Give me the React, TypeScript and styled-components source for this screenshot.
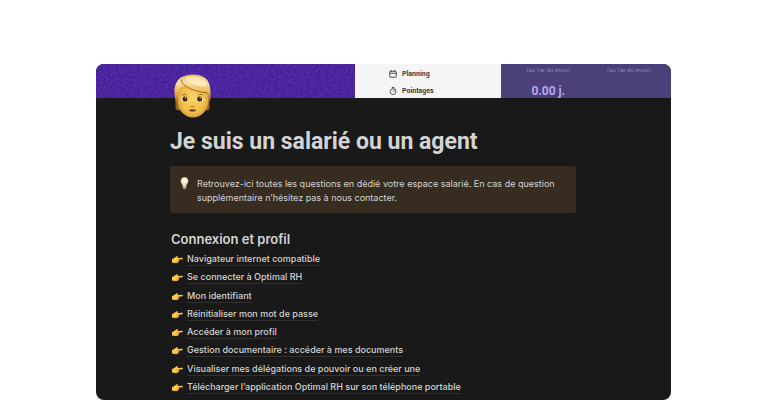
import React from "react";
import styled, { createGlobalStyle } from "styled-components";

const GlobalStyle = createGlobalStyle`
  * { box-sizing: border-box; }
  body {
    margin: 0;
    background: #ffffff;
    font-family: Inter, "Liberation Sans", sans-serif;
  }
`;

const Page = styled.div`
  display: flex;
  flex-direction: column;
  min-height: 100vh;
  padding: 64px 95px 0 96px;
`;

const Card = styled.main`
  flex: 1;
  display: flex;
  flex-direction: column;
  overflow: hidden;
  border-radius: 8px;
  background: #191919;
  color: #d4d4d4;
`;

const Cover = styled.header`
  display: grid;
  grid-template-columns: 259fr 146fr 170fr;
  height: 34px;
  overflow: hidden;
`;

const Texture = styled.svg`
  display: block;
  width: 100%;
  height: 34px;
  background: #45209b;
`;

const Menu = styled.nav`
  display: flex;
  flex-direction: column;
  gap: 5px;
  padding: 4px 0 0 34px;
  background: #f5f5f8;
`;

const MenuLink = styled.a`
  display: flex;
  align-items: center;
  gap: 5px;
  height: 12px;
  color: #3b3b3f;
  font: 700 7px/12px Roboto, sans-serif;
  text-decoration: none;
`;

const Balances = styled.div`
  display: grid;
  grid-template-columns: 1fr 1fr;
  padding: 0 2px 0 7px;
  background: #4b4079;
  text-align: center;
`;

const Note = styled.div`
  color: #8f86b8;
  font: 400 6px/12px Roboto, sans-serif;
`;

const Amount = styled.div`
  padding-top: 7px;
  color: #b7a6ee;
  font: 700 12px/16px Roboto, sans-serif;
`;

const Content = styled.article`
  position: relative;
  flex: 1;
  display: flex;
  flex-direction: column;
  padding: 31px 95px 4px 74px;
`;

const Avatar = styled.svg`
  position: absolute;
  top: -25px;
  left: 77px;
  width: 40px;
  height: 46px;
`;

const Title = styled.h1`
  margin: 0;
  font-family: Roboto, sans-serif;
  font-size: 23px;
  line-height: 26px;
  font-weight: 700;
  white-space: nowrap;
`;

const Callout = styled.aside`
  display: flex;
  gap: 8px;
  margin-top: 11px;
  padding: 11px 12px 8px 10px;
  border-radius: 2px;
  background: #372c20;
  font-size: 9px;
  line-height: 14px;
`;

const CalloutText = styled.p`
  margin: 0;
`;

const BulbIcon = styled.svg`
  flex: none;
  width: 9px;
  height: 12px;
`;

const Section = styled.section`
  flex: 1;
  display: flex;
  flex-direction: column;
  padding: 17px 0 0 1px;
`;

const SectionTitle = styled.h2`
  margin: 0;
  font-size: 13px;
  line-height: 18px;
  font-weight: 600;
`;

const LinkList = styled.ul`
  flex: 1;
  display: flex;
  flex-direction: column;
  justify-content: space-between;
  margin: 2px 0 0;
  padding: 0;
  list-style: none;
`;

const LinkRow = styled.li`
  display: flex;
  align-items: center;
  gap: 4px;
  height: 18px;
`;

const PageLink = styled.a`
  border-bottom: 1px solid #303030;
  color: inherit;
  font-size: 9px;
  line-height: 13px;
  font-weight: 500;
  text-decoration: none;
  white-space: nowrap;
`;

const CoverTexture = () => (
  <Texture aria-hidden="true">
    <filter id="grain" x="0" y="0" width="100%" height="100%">
      <feTurbulence type="fractalNoise" baseFrequency="0.4" numOctaves="2" seed="4" />
      <feColorMatrix values="0 0 0 0 0.2  0 0 0 0 0.08  0 0 0 0 0.5  1.4 0 0 0 -0.5" />
    </filter>
    <rect width="100%" height="100%" filter="url(#grain)" opacity="0.6" />
  </Texture>
);

const CalendarIcon = () => (
  <svg width="8" height="8" viewBox="0 0 16 16" fill="none" stroke="#3b3b3f" strokeWidth="1.8" aria-hidden="true">
    <rect x="1.5" y="2.5" width="13" height="12" rx="1.5" />
    <path d="M1.5 6.5h13M4.5 0v3M11.5 0v3" />
  </svg>
);

const StopwatchIcon = () => (
  <svg width="8" height="8" viewBox="0 0 16 16" fill="none" stroke="#3b3b3f" strokeWidth="1.7" aria-hidden="true">
    <circle cx="8" cy="9.3" r="5.8" />
    <path d="M5.5 1h5M8 1v2.5M13 3l1.4 1.4M8 9.3l2.7-2.7" />
  </svg>
);

const Face = () => (
  <Avatar viewBox="0 0 40 46" role="img" aria-label="Personne">
    <defs>
      <radialGradient id="skin" cx="0.5" cy="0.5" r="0.55">
        <stop offset="0" stopColor="#fad367" />
        <stop offset="0.7" stopColor="#f0bf4b" />
        <stop offset="1" stopColor="#cf9530" />
      </radialGradient>
      <linearGradient id="hair" x1="0" y1="0" x2="0" y2="1">
        <stop offset="0" stopColor="#efc05d" />
        <stop offset="0.3" stopColor="#f8e0a4" />
        <stop offset="0.6" stopColor="#ecbc55" />
        <stop offset="1" stopColor="#a8701f" />
      </linearGradient>
    </defs>
    <path d="M2.500 24v12c1 1.500 4 1.500 6 1h23c2 .5 4 .5 5-1V24z" fill="#96641f" />
    <path d="M4.500 18C4.500 9 11 6 20 6s15.500 4 15.500 14v8c0 9-7.500 16.500-15.500 16.500S4.500 37 4.500 28z" fill="url(#skin)" />
    <path d="M3 29C1 22 .8 14 3.500 9.500 5.500 5.500 8 4 10.500 3.500 16 .8 26 .6 31.500 4.500 37.500 8.500 38.500 18 37 29c-1.200-2-1.200-5-2-8.500-8-.5-16-2.500-22.500-8C8.500 13 5.500 17 5 22c-.2 3-.8 5-2 7z" fill="url(#hair)" />
    <path d="M8.500 6.500c0 3 1.500 5 4 6.500 6 4 13 6 22 7" fill="none" stroke="#a46b1d" strokeWidth="1" />
    <path d="M12 6c5-4 14-3 18 1 2 2 3 4 3.500 6.500-7 .5-15-1.500-21.500-7.500z" fill="#fff1cc" opacity="0.7" />
    <path d="M8.500 22.500c1.500-1.500 3.800-1.700 5.300-.5M25 22c2-1.200 4-1 5.300.6" fill="none" stroke="#9b651c" strokeWidth="1" />
    <ellipse cx="11.800" cy="26.300" rx="3.600" ry="2.500" fill="#ffefc4" />
    <ellipse cx="26.800" cy="26.300" rx="3.600" ry="2.500" fill="#ffefc4" />
    <circle cx="12" cy="26" r="2.500" fill="#35230f" />
    <circle cx="26.600" cy="26" r="2.500" fill="#35230f" />
    <circle cx="12.600" cy="25" r="0.700" fill="#fff" />
    <circle cx="27.200" cy="25" r="0.700" fill="#fff" />
    <path d="M17.500 33c1.200.9 2.800.9 4 0" fill="none" stroke="#c0832a" strokeWidth="1.200" />
    <path d="M15.500 37c2.500-.9 5.500-.9 8 0-1.500 2.200-6.500 2.200-8 0z" fill="#7c4522" />
  </Avatar>
);

const Bulb = () => (
  <BulbIcon viewBox="0 0 18 24" aria-hidden="true">
    <path d="M9 .5C4 .5 1.500 4 1.500 8c0 4 3.500 6 4 10h7c.5-4 4-6 4-10C16.500 4 14 .5 9 .5z" fill="#ffe9b6" />
    <ellipse cx="9" cy="7" rx="4.500" ry="5" fill="#fffdf4" />
    <path d="M7.500 17l-.8-6M10.500 17l.8-6" stroke="#e9ae4c" strokeWidth="1" />
    <path d="M5.500 18h7v3.500L11 23.500H7l-1.500-2z" fill="#b7b7b7" />
  </BulbIcon>
);

const Hand = () => (
  <svg width="12" height="10" viewBox="0 0 24 20" aria-hidden="true">
    <path d="M2 10c3-.2 5-3 8-4.500 1.500-1.200 4-1 4 .4 0 .9-1 1.600-1.500 2.100L22.500 7.500c1.800.2 1.800 2.700 0 2.900l-6.500.4c.8.900.6 2-.2 2.400.5 1.200 0 2.200-1.200 2.500.2 1.300-.8 2.100-2.400 2.100H7c-2 0-3.500-.8-5-.8z" fill="#fbc94b" />
    <path d="M15.500 10.900h-3.500M15 13.400h-3.500M14 15.800h-3M22.500 10.200l-6.500.6" stroke="#bd7c20" strokeWidth="1" fill="none" />
    <path d="M2 16.500c2 0 3 1 5 1h5" stroke="#d38e27" strokeWidth="1.200" fill="none" />
  </svg>
);

const links = [
  "Navigateur internet compatible",
  "Se connecter à Optimal RH",
  "Mon identifiant",
  "Réinitialiser mon mot de passe",
  "Accéder à mon profil",
  "Gestion documentaire : accéder à mes documents",
  "Visualiser mes délégations de pouvoir ou en créer une",
  "Télécharger l’application Optimal RH sur son téléphone portable",
];

export default function App() {
  return (
    <>
      <GlobalStyle />
      <Page>
        <Card>
          <Cover>
            <CoverTexture />
            <Menu>
              <MenuLink href="#planning"><CalendarIcon />Planning</MenuLink>
              <MenuLink href="#pointages"><StopwatchIcon />Pointages</MenuLink>
            </Menu>
            <Balances>
              <div>
                <Note>(au 1er du mois)</Note>
                <Amount>0.00 j.</Amount>
              </div>
              <Note>(au 1er du mois)</Note>
            </Balances>
          </Cover>
          <Content>
            <Face />
            <Title>Je suis un salarié ou un agent</Title>
            <Callout>
              <Bulb />
              <CalloutText>
                Retrouvez-ici toutes les questions en dédié votre espace salarié. En cas de question
                supplémentaire n’hésitez pas à nous contacter.
              </CalloutText>
            </Callout>
            <Section>
              <SectionTitle>Connexion et profil</SectionTitle>
              <LinkList>
                {links.map((label, i) => (
                  <LinkRow key={label}>
                    <Hand />
                    <PageLink href={`#article-${i + 1}`}>{label}</PageLink>
                  </LinkRow>
                ))}
              </LinkList>
            </Section>
          </Content>
        </Card>
      </Page>
    </>
  );
}
